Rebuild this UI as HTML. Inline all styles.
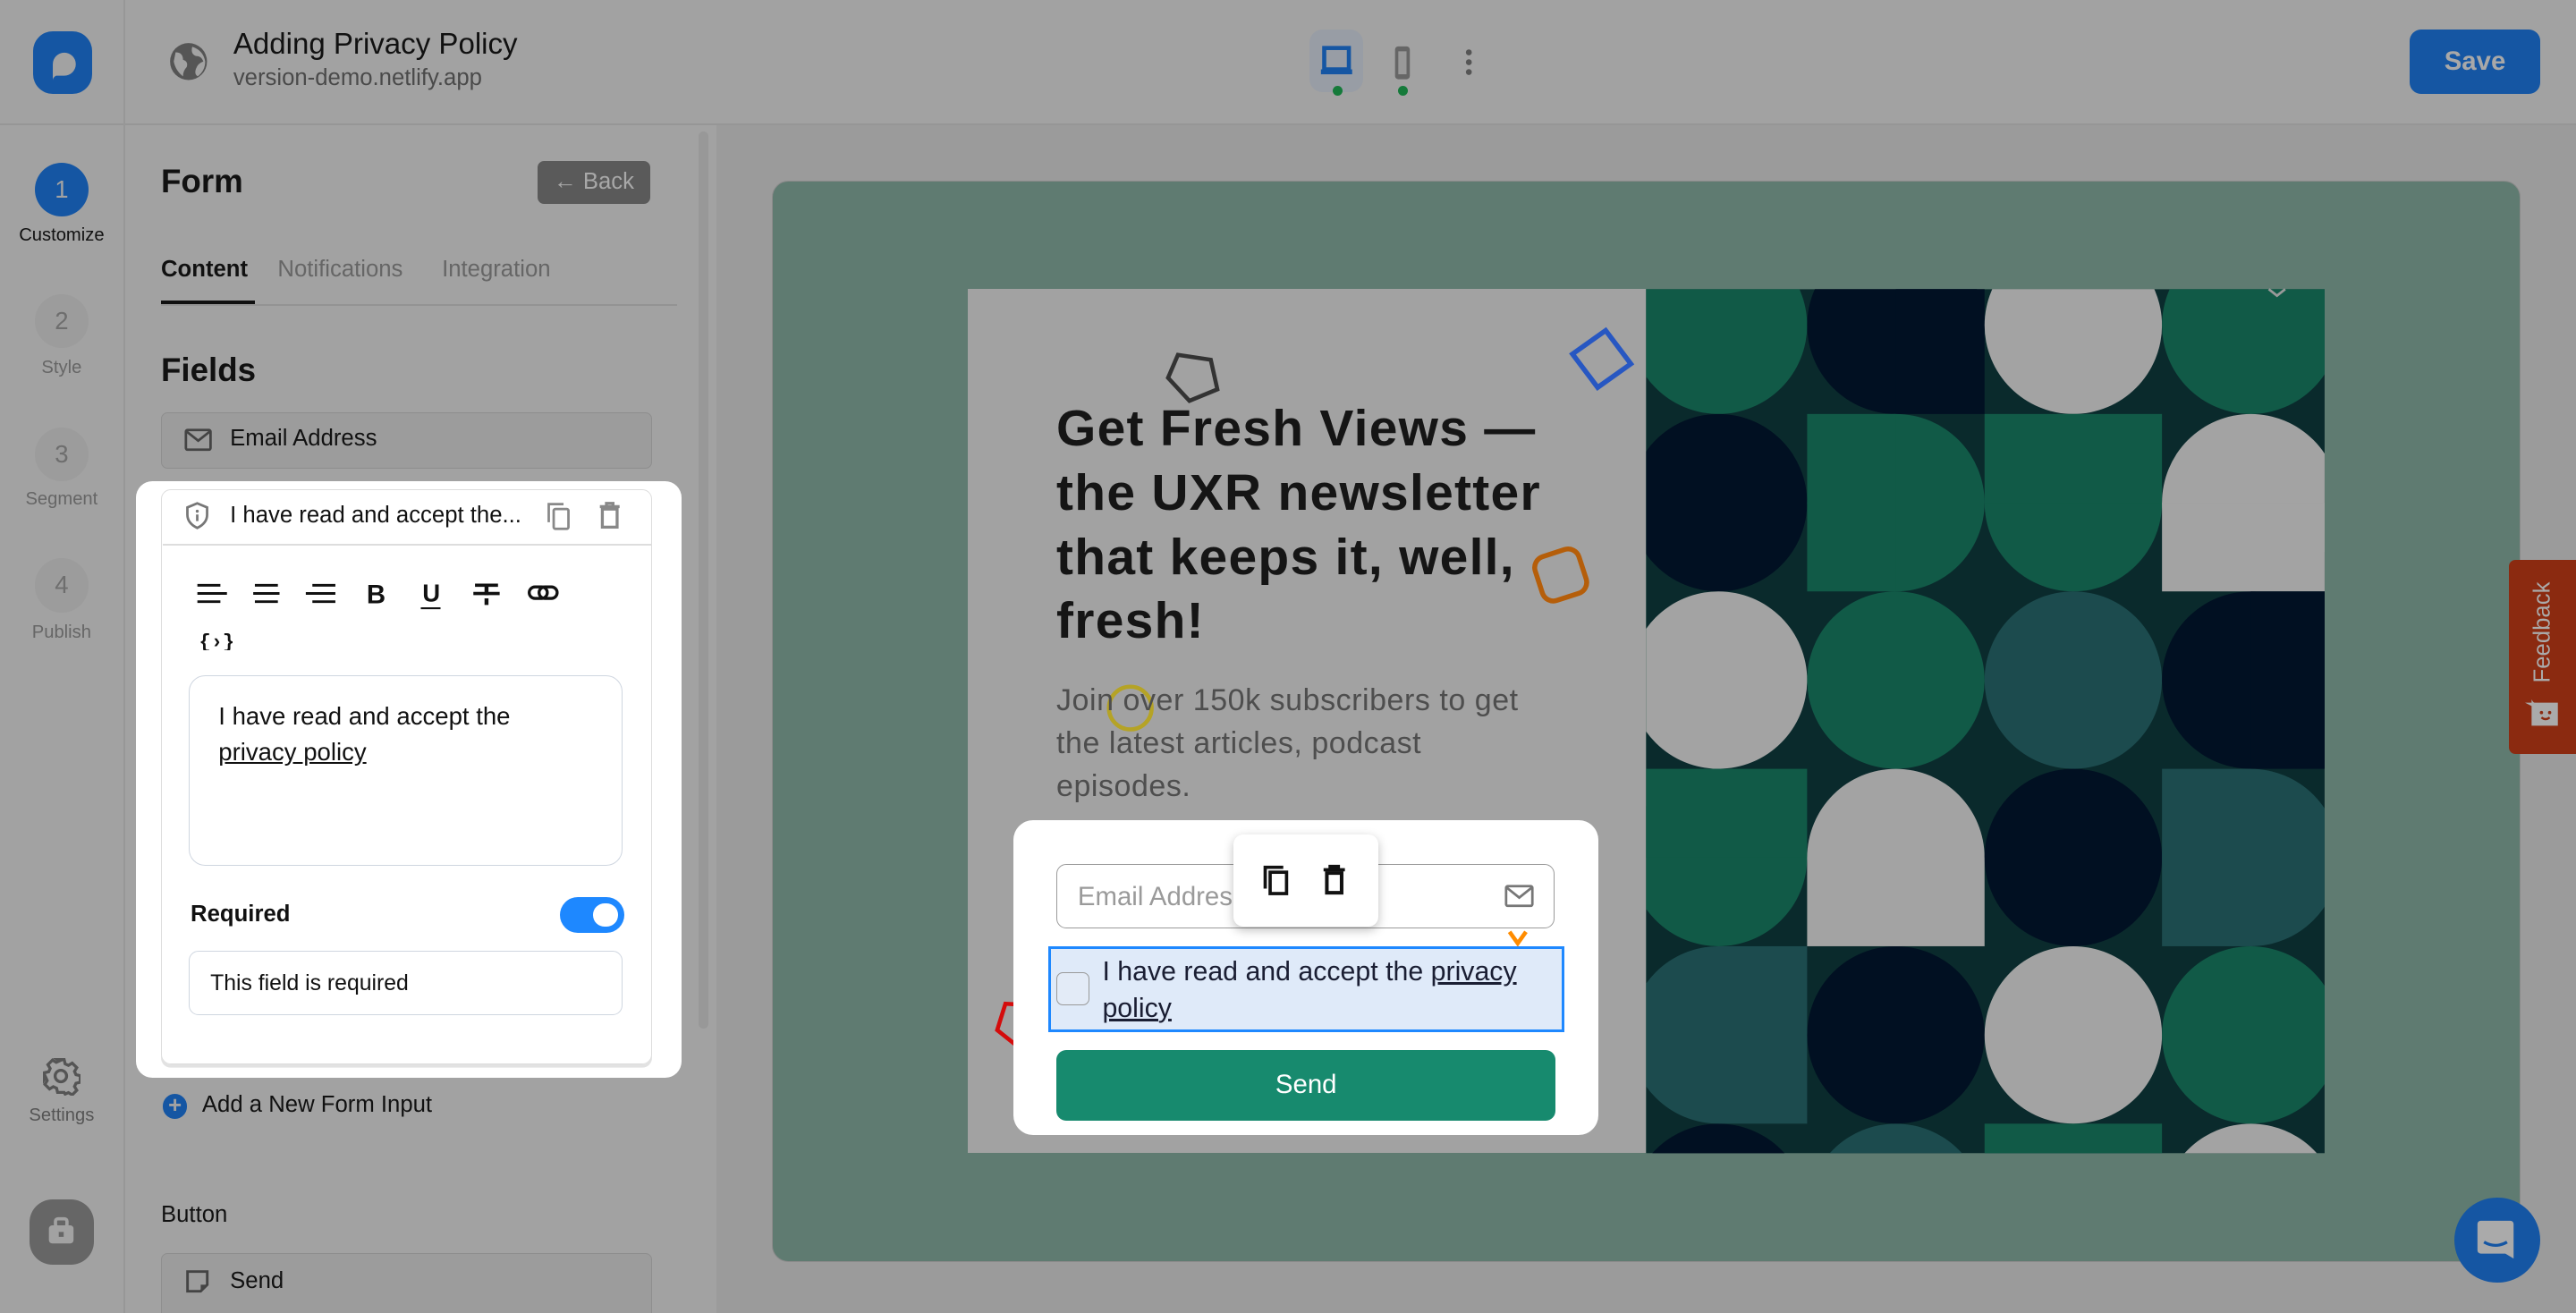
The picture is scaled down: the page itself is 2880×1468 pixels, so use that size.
<!DOCTYPE html>
<html><head><meta charset="utf-8">
<style>
html,body{margin:0;padding:0;}
html{width:2880px;height:1466px;overflow:hidden;background:#a2a2a2;}
body{zoom:1.83673;width:1568px;height:799px;position:relative;overflow:hidden;font-family:"Liberation Sans",Arial,sans-serif;color:#111;background:#a2a2a2;}
.a{position:absolute;}
.ic{position:absolute;}
</style></head><body>

<!-- header -->
<div class="a" style="left:0;top:75px;width:1568px;height:1px;background:#969696"></div>
<div class="a" style="left:75px;top:0;width:1px;height:799px;background:#979797"></div>
<!-- logo -->
<div class="a" style="left:20px;top:19px;width:36px;height:38px;background:#1556a3;border-radius:12px"></div>
<svg class="ic" style="left:20px;top:19px" width="36" height="38" viewBox="0 0 36 38"><path d="M12 29 L12 20 A7 7 0 1 1 19 27 L14 27 Q12 28 12 30Z" fill="#a2a2a2"/></svg>
<svg class="ic" style="left:101px;top:24px" width="27" height="27" viewBox="0 0 24 24"><circle cx="12" cy="12" r="10" fill="#555"/><path d="M5 7 Q9 7 9 11 Q12 12 11 15 Q9 17 9 20 Q5 17 4 12Z M14 4 Q13 8 16 9 Q19 9 20 12 Q17 13 16 16 Q15 19 17 20 Q21 17 21 12 Q20 6 14 4Z" fill="#a2a2a2"/></svg>
<div class="a" style="left:142px;top:17px;font-size:18px;color:#111">Adding Privacy Policy</div>
<div class="a" style="left:142px;top:40px;font-size:14px;color:#4a4a4a">version-demo.netlify.app</div>

<!-- devices -->
<div class="a" style="left:797px;top:18px;width:33px;height:38px;background:#989da5;border-radius:8px"></div>
<svg class="ic" style="left:803px;top:27px" width="22" height="20" viewBox="0 0 22 20"><rect x="3" y="2" width="15" height="13" fill="none" stroke="#1556a3" stroke-width="2.5"/><rect x="1" y="15" width="19" height="3" fill="#1556a3"/></svg>
<div class="a" style="left:811px;top:52px;width:6px;height:6px;border-radius:3px;background:#157a3a"></div>
<svg class="ic" style="left:847px;top:27px" width="14" height="22" viewBox="0 0 14 22"><rect x="2" y="1" width="9" height="20" rx="2" fill="#666"/><rect x="4" y="4" width="5" height="14" fill="#999"/></svg>
<div class="a" style="left:851px;top:52px;width:6px;height:6px;border-radius:3px;background:#157a3a"></div>
<svg class="ic" style="left:889px;top:29px" width="10" height="18" viewBox="0 0 10 18"><circle cx="5" cy="3" r="1.8" fill="#555"/><circle cx="5" cy="9" r="1.8" fill="#555"/><circle cx="5" cy="15" r="1.8" fill="#555"/></svg>
<div class="a" style="left:1467px;top:18px;width:79px;height:39px;background:#1556a3;border-radius:7px;color:#a8a8a8;font-weight:bold;font-size:16px;text-align:center;line-height:39px">Save</div>

<!-- left rail -->
<div class="a" style="left:21px;top:99px;width:33px;height:33px;border-radius:50%;background:#1556a3;color:#a2a2a2;font-size:15px;text-align:center;line-height:33px">1</div>
<div class="a" style="left:0;top:137px;width:75px;text-align:center;font-size:11px;color:#111">Customize</div>
<div class="a" style="left:21px;top:179px;width:33px;height:33px;border-radius:50%;background:#9c9c9c;color:#6e6e6e;font-size:15px;text-align:center;line-height:33px">2</div>
<div class="a" style="left:0;top:218px;width:75px;text-align:center;font-size:11px;color:#666">Style</div>
<div class="a" style="left:21px;top:260px;width:33px;height:33px;border-radius:50%;background:#9c9c9c;color:#6e6e6e;font-size:15px;text-align:center;line-height:33px">3</div>
<div class="a" style="left:0;top:298px;width:75px;text-align:center;font-size:11px;color:#666">Segment</div>
<div class="a" style="left:21px;top:340px;width:33px;height:33px;border-radius:50%;background:#9c9c9c;color:#6e6e6e;font-size:15px;text-align:center;line-height:33px">4</div>
<div class="a" style="left:0;top:379px;width:75px;text-align:center;font-size:11px;color:#666">Publish</div>
<svg class="ic" style="left:25px;top:643px" width="24" height="24" viewBox="0 0 24 24"><path d="M10 2h4l.6 2.6 2 .9 2.3-1.4 2.8 2.8-1.4 2.3.9 2 2.6.6v4l-2.6.6-.9 2 1.4 2.3-2.8 2.8-2.3-1.4-2 .9L14 22h-4l-.6-2.6-2-.9-2.3 1.4-2.8-2.8 1.4-2.3-.9-2L2 14v-4l2.6-.6.9-2-1.4-2.3 2.8-2.8 2.3 1.4 2-.9Z" fill="none" stroke="#555" stroke-width="1.8"/><circle cx="12" cy="12" r="3.5" fill="none" stroke="#555" stroke-width="1.8"/></svg>
<div class="a" style="left:0;top:673px;width:75px;text-align:center;font-size:11px;color:#555">Settings</div>
<div class="a" style="left:18px;top:730px;width:39px;height:40px;border-radius:14px;background:#666"></div>
<svg class="ic" style="left:28px;top:740px" width="19" height="19" viewBox="0 0 19 19"><rect x="6" y="2" width="7" height="5" rx="1.5" fill="none" stroke="#a2a2a2" stroke-width="2"/><rect x="2" y="6" width="15" height="11" rx="2" fill="#a2a2a2"/><rect x="8" y="10" width="3" height="3" fill="#666"/></svg>

<!-- panel -->
<div class="a" style="left:425px;top:80px;width:6px;height:546px;border-radius:3px;background:#989898"></div>
<div class="a" style="left:98px;top:99px;font-size:20px;font-weight:bold">Form</div>
<div class="a" style="left:327px;top:98px;width:69px;height:26px;background:#5a5a5a;border-radius:4px;color:#a8a8a8;font-size:14px;line-height:26px;text-align:center">&#8592; Back</div>
<div class="a" style="left:98px;top:156px;font-size:14px;font-weight:bold">Content</div>
<div class="a" style="left:169px;top:156px;font-size:14px;color:#666">Notifications</div>
<div class="a" style="left:269px;top:156px;font-size:14px;color:#666">Integration</div>
<div class="a" style="left:98px;top:185px;width:314px;height:1px;background:#939393"></div>
<div class="a" style="left:98px;top:183px;width:57px;height:2px;background:#111"></div>
<div class="a" style="left:98px;top:214px;font-size:20px;font-weight:bold">Fields</div>
<div class="a" style="left:98px;top:251px;width:298px;height:33px;background:#9c9c9c;border:1px solid #8e8e8e;border-radius:4px"></div>
<svg class="ic" style="left:112px;top:260px" width="17" height="15" viewBox="0 0 17 15"><rect x="1" y="1.5" width="15" height="12" rx="1" fill="none" stroke="#444" stroke-width="1.5"/><path d="M1.5 2.5 8.5 8 15.5 2.5" fill="none" stroke="#444" stroke-width="1.5"/></svg>
<div class="a" style="left:140px;top:259px;font-size:14px">Email Address</div>

<!-- white card -->
<div class="a" style="left:83px;top:293px;width:332px;height:363px;background:#fff;border-radius:10px"></div>
<div class="a" style="left:98px;top:298px;width:298px;height:349px;border:1px solid #ddd;border-radius:6px;box-shadow:0 2px 0 #e2e2e2"></div>
<div class="a" style="left:99px;top:331px;width:298px;height:1px;background:#ddd"></div>
<svg class="ic" style="left:111px;top:305px" width="18" height="18" viewBox="0 0 18 18"><path d="M9 1.5 15 4v4.5c0 4-3 6.5-6 8-3-1.5-6-4-6-8V4Z" fill="none" stroke="#777" stroke-width="1.5"/><circle cx="9" cy="6.3" r=".9" fill="#777"/><path d="M9 8.3v4" stroke="#777" stroke-width="1.5"/></svg>
<div class="a" style="left:140px;top:306px;font-size:14px;color:#111">I have read and accept the...</div>
<svg class="ic" style="left:331px;top:305px" width="18" height="18" viewBox="0 0 18 18"><path d="M3 13V2h9" fill="none" stroke="#888" stroke-width="1.5"/><rect x="6" y="5" width="9" height="12" rx="1" fill="none" stroke="#888" stroke-width="1.5"/></svg>
<svg class="ic" style="left:363px;top:305px" width="16" height="18" viewBox="0 0 16 18"><path d="M2 3.5h12M6 3V1.5h4V3" fill="none" stroke="#888" stroke-width="1.8"/><rect x="3.5" y="5" width="9" height="11" fill="none" stroke="#888" stroke-width="1.8"/></svg>
<svg class="ic" style="left:118px;top:352px" width="230" height="44" viewBox="0 0 230 44">
<g stroke="#111" stroke-width="1.6"><path d="M2 4h14M2 9h18M2 14h14"/><path d="M37 4h14M36 9h16M37 14h14"/><path d="M72 4h14M68 9h18M72 14h14"/></g>
<text x="105" y="15" font-family="Liberation Sans" font-weight="bold" font-size="16" fill="#111">B</text>
<text x="139" y="14" font-family="Liberation Sans" font-weight="bold" font-size="15" fill="#111">U</text><path d="M138 18h12" stroke="#111" stroke-width="1.2"/>
<path d="M171 4h14M170 9h16" stroke="#111" stroke-width="2"/><path d="M178 4v6M178 12v4" stroke="#111" stroke-width="2.4"/>
<rect x="204" y="5" width="11" height="7" rx="3.5" fill="none" stroke="#111" stroke-width="1.8"/><rect x="210" y="5" width="11" height="7" rx="3.5" fill="none" stroke="#111" stroke-width="1.8"/>
<text x="3" y="42" font-family="Liberation Mono" font-weight="bold" font-size="12" fill="#111">{›}</text>
</svg>
<div class="a" style="left:115px;top:411px;width:263px;height:115px;border:1px solid #cfd6e0;border-radius:10px"></div>
<div class="a" style="left:133px;top:425px;font-size:15px;line-height:22px;color:#111">I have read and accept the<br><u>privacy policy</u></div>
<div class="a" style="left:116px;top:549px;font-size:14px;font-weight:bold">Required</div>
<div class="a" style="left:341px;top:546px;width:39px;height:22px;border-radius:11px;background:#1e88ff"></div>
<div class="a" style="left:361px;top:550px;width:15px;height:14px;border-radius:7px;background:#fff"></div>
<div class="a" style="left:115px;top:579px;width:263px;height:38px;border:1px solid #cfd6e0;border-radius:6px"></div>
<div class="a" style="left:128px;top:591px;font-size:13.5px;color:#111">This field is required</div>

<div class="a" style="left:99px;top:666px;width:15px;height:15px;border-radius:50%;background:#1556a3;color:#a2a2a2;font-size:14px;line-height:15px;text-align:center;font-weight:bold">+</div>
<div class="a" style="left:123px;top:665px;font-size:14px">Add a New Form Input</div>
<div class="a" style="left:98px;top:732px;font-size:14px">Button</div>
<div class="a" style="left:98px;top:763px;width:298px;height:40px;background:#9c9c9c;border:1px solid #8e8e8e;border-radius:4px"></div>
<svg class="ic" style="left:112px;top:772px" width="16" height="16" viewBox="0 0 16 16"><path d="M2 2h12v8l-4 4H2Z" fill="none" stroke="#444" stroke-width="1.6"/><path d="M10 14v-4h4" fill="#444"/></svg>
<div class="a" style="left:140px;top:772px;font-size:14px">Send</div>

<!-- canvas -->
<div class="a" style="left:436px;top:76px;width:1132px;height:723px;background:#9b9b9b"></div>
<div class="a" style="left:470px;top:110px;width:1064px;height:658px;background:#5f7b71;border-radius:10px;border:1px solid #8a8a8a;box-sizing:border-box"></div>
<div class="a" style="left:589px;top:176px;width:413px;height:526px;background:#a2a2a2"></div>

<svg class="a" style="left:0;top:0" width="1568" height="799" viewBox="0 0 1568 799">
<defs><clipPath id="c"><rect x="1002" y="176" width="413" height="526"/></clipPath></defs>
<g clip-path="url(#c)">
<rect x="1002" y="176" width="413" height="526" fill="#0a2a2c"/>
<circle cx="1046" cy="198" r="54" fill="#115a47"/>
<circle cx="1154" cy="198" r="54" fill="#011022"/><rect x="1154" y="144" width="54" height="108" fill="#011022"/>
<circle cx="1262" cy="198" r="54" fill="#a3a3a3"/>
<circle cx="1370" cy="198" r="54" fill="#115a47"/>
<circle cx="1046" cy="306" r="54" fill="#011022"/>
<circle cx="1154" cy="306" r="54" fill="#115a47"/><rect x="1100" y="252" width="54" height="108" fill="#115a47"/>
<circle cx="1262" cy="306" r="54" fill="#115a47"/><rect x="1208" y="252" width="108" height="54" fill="#115a47"/>
<circle cx="1370" cy="306" r="54" fill="#a3a3a3"/><rect x="1316" y="306" width="108" height="54" fill="#a3a3a3"/>
<circle cx="1046" cy="414" r="54" fill="#a3a3a3"/>
<circle cx="1154" cy="414" r="54" fill="#115a47"/>
<circle cx="1262" cy="414" r="54" fill="#1c4b4e"/>
<circle cx="1370" cy="414" r="54" fill="#011022"/><rect x="1370" y="360" width="54" height="108" fill="#011022"/>
<circle cx="1046" cy="522" r="54" fill="#115a47"/><rect x="992" y="468" width="108" height="54" fill="#115a47"/>
<circle cx="1154" cy="522" r="54" fill="#a3a3a3"/><rect x="1100" y="522" width="108" height="54" fill="#a3a3a3"/>
<circle cx="1262" cy="522" r="54" fill="#011022"/>
<circle cx="1370" cy="522" r="54" fill="#1c4b4e"/><rect x="1316" y="468" width="54" height="108" fill="#1c4b4e"/>
<circle cx="1046" cy="630" r="54" fill="#1c4b4e"/><rect x="1046" y="576" width="54" height="108" fill="#1c4b4e"/>
<circle cx="1154" cy="630" r="54" fill="#011022"/>
<circle cx="1262" cy="630" r="54" fill="#a3a3a3"/>
<circle cx="1370" cy="630" r="54" fill="#115a47"/>
<circle cx="1046" cy="738" r="54" fill="#011022"/>
<circle cx="1154" cy="738" r="54" fill="#1c4b4e"/>
<rect x="1208" y="684" width="108" height="54" fill="#115a47"/>
<circle cx="1370" cy="738" r="54" fill="#a3a3a3"/>
</g>
<path d="M1381 176 l5 4 l5 -4" stroke="#999" stroke-width="1.5" fill="none"/>
<polygon points="717,216 737,219 741,237 724,244 711,230" fill="none" stroke="#333" stroke-width="2.5"/>
<polygon points="975,201 993,219 975,236 957,218" fill="none" stroke="#2757c2" stroke-width="3" transform="rotate(8 975 218)"/>
<rect x="936" y="336" width="28" height="28" rx="7" fill="none" stroke="#b55e0a" stroke-width="3" transform="rotate(-18 950 350)"/>
<circle cx="688" cy="431" r="13" fill="none" stroke="#b5a326" stroke-width="2.5"/>
<polygon points="612,611 630,612 637,629 622,639 607,627" fill="none" stroke="#d40c0c" stroke-width="2.5"/>
</svg>

<div class="a" style="left:643px;top:242px;font-size:31px;line-height:39px;font-weight:bold;color:#151515;letter-spacing:0.7px;white-space:nowrap">Get Fresh Views —<br>the UXR newsletter<br>that keeps it, well,<br>fresh!</div>
<div class="a" style="left:643px;top:414px;font-size:18.5px;line-height:26px;color:#4e4e4e;letter-spacing:0.3px;white-space:nowrap">Join over 150k subscribers to get<br>the latest articles, podcast<br>episodes.</div>

<!-- form card -->
<div class="a" style="left:617px;top:499px;width:356px;height:192px;background:#fff;border-radius:12px"></div>
<div class="a" style="left:643px;top:526px;width:302px;height:38px;border:1px solid #9a9a9a;border-radius:6px"></div>
<div class="a" style="left:656px;top:537px;font-size:16px;color:#9a9a9a">Email Address</div>
<svg class="ic" style="left:916px;top:538px" width="18" height="15" viewBox="0 0 18 15"><rect x="1" y="1.5" width="16" height="12" rx="1" fill="none" stroke="#777" stroke-width="1.5"/><path d="M1.5 2.5 9 8.5 16.5 2.5" fill="none" stroke="#777" stroke-width="1.5"/></svg>
<svg class="ic" style="left:917px;top:566px" width="14" height="10" viewBox="0 0 14 10"><path d="M2 1 7 8 12 1" fill="none" stroke="#ff8c00" stroke-width="2.5"/></svg>
<div class="a" style="left:751px;top:508px;width:88px;height:56px;background:#fff;border-radius:6px;box-shadow:0 2px 6px rgba(0,0,0,.25)"></div>
<svg class="ic" style="left:767px;top:526px" width="20" height="20" viewBox="0 0 20 20"><path d="M3 15V2h11" fill="none" stroke="#111" stroke-width="2"/><rect x="6" y="5" width="10" height="13" fill="none" stroke="#111" stroke-width="2"/></svg>
<svg class="ic" style="left:804px;top:526px" width="16" height="20" viewBox="0 0 16 20"><path d="M1.5 3.5h13M5.5 3V1.5h5V3" fill="none" stroke="#111" stroke-width="2"/><rect x="3.5" y="5.5" width="9" height="12" fill="none" stroke="#111" stroke-width="2.2"/></svg>
<div class="a" style="left:638px;top:576px;width:311px;height:49px;background:#dfeaf9;border:2px solid #1e88ff"></div>
<div class="a" style="left:643px;top:592px;width:19px;height:19px;border:1px solid #999;border-radius:4px;background:#e3ebf7"></div>
<div class="a" style="left:671px;top:581px;font-size:16.5px;line-height:22px;color:#1a1e33;width:280px">I have read and accept the <u>privacy policy</u></div>
<div class="a" style="left:643px;top:639px;width:304px;height:43px;background:#178a6e;border-radius:6px;color:#fff;font-size:16px;text-align:center;line-height:43px">Send</div>

<!-- feedback -->
<div class="a" style="left:1527px;top:341px;width:41px;height:118px;background:#8b2a10;border-radius:4px 0 0 4px"></div>
<div class="a" style="left:1548px;top:385px;font-size:14px;color:#aaa;transform:translate(-50%,-50%) rotate(-90deg);white-space:nowrap">Feedback</div>
<svg class="ic" style="left:1537px;top:426px" width="22" height="18" viewBox="0 0 22 18"><path d="M0 2h4V0h0Q5 2 6 2h14v14H4V4Z" fill="#aaa"/><circle cx="10" cy="8" r="1" fill="#8b2a10"/><circle cx="15" cy="8" r="1" fill="#8b2a10"/><path d="M10 11q2.5 2 5 0" stroke="#8b2a10" fill="none" stroke-width="1.3"/></svg>
<div class="a" style="left:1494px;top:729px;width:52px;height:52px;border-radius:50%;background:#1556a3"></div>
<svg class="ic" style="left:1507px;top:742px" width="26" height="26" viewBox="0 0 26 26"><path d="M3 1h18a2 2 0 0 1 2 2v21l-5-3H3a2 2 0 0 1-2-2V3a2 2 0 0 1 2-2Z" fill="#aaa"/><path d="M5 14q7 4 14 0" stroke="#1556a3" stroke-width="1.8" fill="none"/></svg>
</body></html>
